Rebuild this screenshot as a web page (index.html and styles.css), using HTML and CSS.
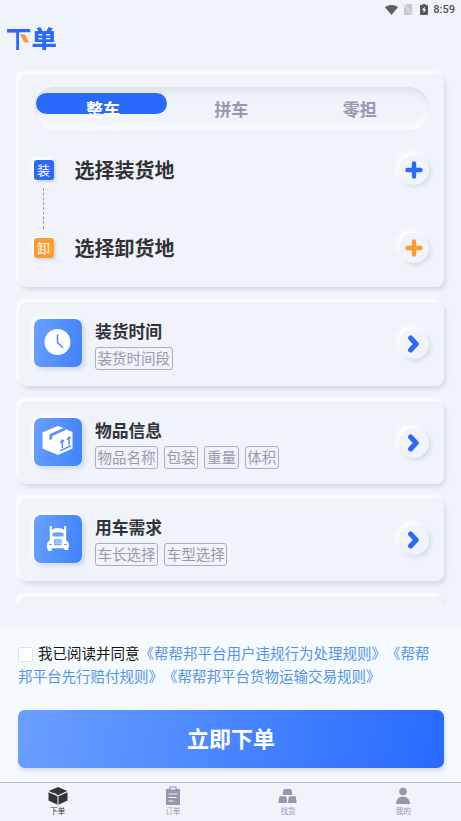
FILE: index.html
```html
<!DOCTYPE html>
<html lang="zh-CN">
<head>
<meta charset="utf-8">
<title>下单</title>
<link rel="stylesheet" href="styles.css">
</head>
<body>
<div class="app">
  <div class="status">
    <svg width="13" height="10" viewBox="0 0 13 10"><path d="M0 2.3C3.6-.8 9.4-.8 13 2.3L6.500 10z" fill="#5d5f62"/></svg>
    <svg class="sim" width="10" height="11" viewBox="0 0 10 11"><path d="M4 0h5v11H1V3z" fill="#c3c6cb"/><path d="M0 0l10 11" stroke="#f0f3fa" stroke-width="2"/><path d="M.5.5l9 10" stroke="#a9acb1" stroke-width=".8"/></svg>
    <svg class="battery" width="8" height="11" viewBox="0 0 8 11"><path d="M2.500 0h3v1H7q1 0 1 1v8q0 1-1 1H1q-1 0-1-1V2q0-1 1-1h1.500z" fill="#55575a"/><path d="M4.700 2.500L2 6.300h1.700V9L6 5.300H4.500z" fill="#fff"/></svg>
    <span>8:59</span>
  </div>
  <header class="head"><h1 class="logo">下单</h1></header>
  <main class="scroll">
    <section class="card route">
      <div class="tabs">
        <div class="tab active">整车</div>
        <div class="tab">拼车</div>
        <div class="tab">零担</div>
      </div>
      <div class="place">
        <span class="mark load">装</span><span class="place-name">选择装货地</span>
        <span class="round"><svg width="18" height="18" viewBox="0 0 18 18"><path d="M9 2.500v13M2.500 9h13" stroke="#2b69f8" stroke-width="4.400" stroke-linecap="round"/></svg></span>
      </div>
      <div class="link"></div>
      <div class="place">
        <span class="mark unload">卸</span><span class="place-name">选择卸货地</span>
        <span class="round"><svg width="18" height="18" viewBox="0 0 18 18"><path d="M9 2.500v13M2.500 9h13" stroke="#ff9b30" stroke-width="4.400" stroke-linecap="round"/></svg></span>
      </div>
    </section>

    <section class="card item">
      <div class="tile"><svg width="48" height="48" viewBox="0 0 48 48"><circle cx="23.500" cy="23" r="13" fill="#fff"/><path d="M23.500 15.500v8l5.500 5.200" fill="none" stroke="#4c86fc" stroke-width="1.500"/></svg></div>
      <div class="info"><h2>装货时间</h2><div class="tags"><span>装货时间段</span></div></div>
      <span class="round"><svg width="18" height="18" viewBox="0 0 18 18"><path d="M5.600 3l5.600 6-5.600 6" fill="none" stroke="#2b69f8" stroke-width="5" stroke-linecap="round" stroke-linejoin="round"/></svg></span>
    </section>

    <section class="card item goods">
      <div class="tile"><svg width="48" height="48" viewBox="0 0 48 48"><path d="M8.500 14.500L23 8.200q1-.4 2 0L38.500 14v16.500L25 36.600q-1 .5-2 0L9.500 31q-1-.4-1-1.500z" fill="#fff"/><path d="M29.500 10L15.500 16.200V22.500L18.300 20.800V18L32.200 11.800z" fill="#5890fd"/><path d="M26 32.600l11-4.700M28.300 30v-7M35 27.200v-7M26.400 25l1.900-3 1.900 1.500M33.100 22l1.900-3 1.900 1.500" fill="none" stroke="#4d87fd" stroke-width="1.400"/></svg></div>
      <div class="info"><h2>物品信息</h2><div class="tags"><span>物品名称</span><span>包装</span><span>重量</span><span>体积</span></div></div>
      <span class="round"><svg width="18" height="18" viewBox="0 0 18 18"><path d="M5.600 3l5.600 6-5.600 6" fill="none" stroke="#2b69f8" stroke-width="5" stroke-linecap="round" stroke-linejoin="round"/></svg></span>
    </section>

    <section class="card item truck">
      <div class="tile"><svg width="48" height="48" viewBox="0 0 48 48"><path d="M15.800 11h2v4q2-2 6.200-2t6.200 2v-4h2v14l1.300 1.500q1.500.5 1.500 3.500v2.500h-.8V35h-4v-1.800H17.800V36h-4v-2.500H13V30q0-3 1.500-3.500L15.800 25z" fill="#fff"/><path d="M18.500 18q5.500-1.500 11 0v3.500h-11zM20 24.300h7.500v6H20z" fill="#6ba0fd"/><path d="M20.500 25.700h6.500M20.500 27.200h6.500M20.500 28.700h6.500" stroke="#d7e6ff" stroke-width=".7"/><path d="M15 29.500h3M30 29.500h3" stroke="#6ba0fd" stroke-width="1.200"/></svg></div>
      <div class="info"><h2>用车需求</h2><div class="tags"><span>车长选择</span><span>车型选择</span></div></div>
      <span class="round"><svg width="18" height="18" viewBox="0 0 18 18"><path d="M5.600 3l5.600 6-5.600 6" fill="none" stroke="#2b69f8" stroke-width="5" stroke-linecap="round" stroke-linejoin="round"/></svg></span>
    </section>
    <section class="card item"></section>
  </main>

  <section class="confirm">
    <p><i class="check"></i>我已阅读并同意<a>《帮帮邦平台用户违规行为处理规则》</a><a>《帮帮<br>邦平台先行赔付规则》</a><a>《帮帮邦平台货物运输交易规则》</a></p>
    <div class="submit">立即下单</div>
  </section>

  <nav class="nav">
    <div class="nav-item on"><svg width="20" height="20" viewBox="0 0 20 20"><path d="M10 1l9.300 4L10 9.200.7 5zM.5 6.200l9 4v8.600l-9-4.300zM10.500 10.200l9-4v8.300l-9 4.300z" fill="#333438"/><path d="M6 7l3 2" stroke="#ddd" stroke-width="1"/></svg><span>下单</span></div>
    <div class="nav-item"><svg width="20" height="20" viewBox="0 0 20 20"><path d="M3 3h14v16H3z" fill="#9298ad"/><path d="M7 3V1h6v3H7z" fill="#f0f3fa" stroke="#9298ad" stroke-width="1.200"/><path d="M5.500 8h9M5.500 11.500h8M5.500 15h5" stroke="#f0f3fa" stroke-width="1.200"/></svg><span>订单</span></div>
    <div class="nav-item"><svg width="20" height="20" viewBox="0 0 20 20"><path d="M6.500 3h6q.7 0 .9.700l1 4.300q.1 1-.8 1H5.400q-.9 0-.8-1l1-4.300q.2-.7.900-.7zM2 10.300h5.500q.7 0 .9.700l.8 5q.1 1-.8 1H1.200q-.8 0-.7-1l.7-5q.1-.7.800-.7zM11.500 10.300H17q.7 0 .8.700l.8 5q.1 1-.8 1h-7q-.9 0-.8-1l.8-5q.2-.7.700-.7z" fill="#9298ad"/></svg><span>找货</span></div>
    <div class="nav-item"><svg width="20" height="20" viewBox="0 0 20 20"><circle cx="10" cy="5.500" r="3.800" fill="#9298ad"/><path d="M3 18v-1.500Q4.500 10.500 10 10.500t7 6V18z" fill="#9298ad"/></svg><span>我的</span></div>
  </nav>
</div>
</body>
</html>
```
FILE: styles.css
```css
* { box-sizing: border-box; }
body {
  margin: 0;
  background: #f0f3fa;
  font-family: "Noto Sans CJK SC", sans-serif;
  text-spacing-trim: space-all;
  color: #303236;
}
svg { display: block; flex: none; }
.app { height: 821px; display: flex; flex-direction: column; overflow: hidden; }

.status {
  height: 19px;
  flex: none;
  display: flex;
  align-items: center;
  justify-content: flex-end;
  padding-right: 6px;
  font: 500 11px/19px Roboto, sans-serif;
  color: #4f5154;
}
.status .sim { margin-left: 5px; }
.status .battery { margin: 0 5px 0 7px; }
.head { height: 44px; flex: none; padding: 6px 0 0 6px; }
.logo {
  position: relative;
  margin: 0;
  width: 52px;
  font-size: 25.500px;
  font-weight: 900;
  line-height: 26px;
  transform: scaleY(.92);
  color: transparent;
  background:
    linear-gradient(#2b69f8, #2b69f8) 0 0 / 13px 100% no-repeat,
    linear-gradient(#2b69f8, #2b69f8) 0 0 / 100% 7px no-repeat,
    linear-gradient(#2b69f8, #2b69f8) 25px 0 / 27px 100% no-repeat;
  -webkit-background-clip: text;
  background-clip: text;
}
.logo::after {
  content: "";
  position: absolute;
  left: 16px;
  top: 9px;
  width: 4.500px;
  height: 9px;
  background: #ff9b30;
  transform: skewX(28deg);
}

.scroll { height: 540px; flex: none; overflow: hidden; padding: 11px 17px 0 18.500px; }
.card {
  border-radius: 8px;
  background: #f0f3fa;
  box-shadow: -3px -3px 3px #fcfdfe, 2px 3px 4px #d3dae5;
  margin-bottom: 15px;
}
.route { height: 213px; padding: 13px 15px 0 15px; }
.tabs {
  height: 43px;
  border-radius: 20px;
  padding: 6px 5px 0 2.500px;
  display: grid;
  grid-template-columns: 131px 1fr 1fr;
  box-shadow: inset 1px 5px 6px #dbe2eb, inset -2px -5px 5px #fafcfe;
}
.tab {
  height: 21px;
  text-align: center;
  font-size: 17px;
  font-weight: 700;
  line-height: 32px;
  color: #9499b0;
}
.tab.active { color: #fff; background: #2b69fc; border-radius: 11px; padding-left: 3px; }
.place { height: 30px; margin-top: 25px; display: flex; align-items: center; }
.mark {
  width: 20px;
  height: 20px;
  border-radius: 3px;
  color: #fff;
  font-size: 13px;
  line-height: 19px;
  text-align: center;
  box-shadow: -2px -2px 3px #fff, 2px 2px 3px #d0d8e4;
}
.load { background: #2b69f8; }
.unload { background: #ff9b30; }
.place-name { margin-left: 21px; font-size: 20px; font-weight: 700; line-height: 30px; flex: 1; }
.place .round { height: 30px; margin-top: -1px; }
.link { height: 41px; width: 0; margin: 3px 0 -21px 9px; border-left: 1px dashed #9a9eaa; }
.round {
  width: 30px;
  height: 30px;
  border-radius: 50%;
  display: flex;
  align-items: center;
  justify-content: center;
  background: #f0f3fa;
  box-shadow: -3px -3px 4px #fdfefe, 2px 2px 4px #d2dae4;
}

.item { height: 84px; padding: 17px 15px 0 15.500px; display: flex; }
.goods { height: 83px; }
.truck { height: 83px; margin-top: -1px; }
.tile {
  width: 48px;
  height: 48px;
  border-radius: 7px;
  background: linear-gradient(100deg, #6aa0ff, #3f82fd);
  box-shadow: -2px -2px 4px #fff, 3px 3px 4px #d2dae6;
}
.info { flex: 1; margin-left: 13px; }
.info h2 { margin: 0; font-size: 16.800px; font-weight: 700; line-height: 24px; }
.tags { display: flex; gap: 6px; margin-top: 3.500px; }
.tags span {
  height: 23.500px;
  padding: 0 1.600px;
  border: 1px solid #a9afc1;
  border-radius: 3px;
  font-size: 14.500px;
  line-height: 20px;
  color: #959bad;
}
.item .round { margin-top: 9.500px; }

.confirm { height: 155px; flex: none; margin-top: 24px; background: #f5faff; padding: 14px 17px 0 18px; }
.confirm p { margin: 0; font-size: 14.500px; line-height: 23px; color: #151515; white-space: nowrap; }
.confirm a { color: #5493e8; }
.check {
  display: inline-block;
  width: 15px;
  height: 15px;
  margin-right: 5px;
  vertical-align: -3px;
  background: #fff;
  border: 1px solid #e2e3e7;
  border-radius: 2px;
}
.submit {
  height: 58px;
  margin-top: 23px;
  border-radius: 7px;
  background: linear-gradient(100deg, #6aa0ff, #286aff);
  box-shadow: 1px 3px 4px #d4dce9;
  color: #fff;
  text-align: center;
  font-size: 22px;
  font-weight: 700;
  line-height: 55px;
}
.nav { flex: 1; border-top: 1px solid #b7bcc8; display: grid; grid-template-columns: repeat(4, 1fr); }
.nav-item { display: flex; flex-direction: column; align-items: center; padding-top: 3px; font-size: 7.700px; line-height: 10px; color: #9298ad; }
.nav-item.on { color: #333438; }
```
